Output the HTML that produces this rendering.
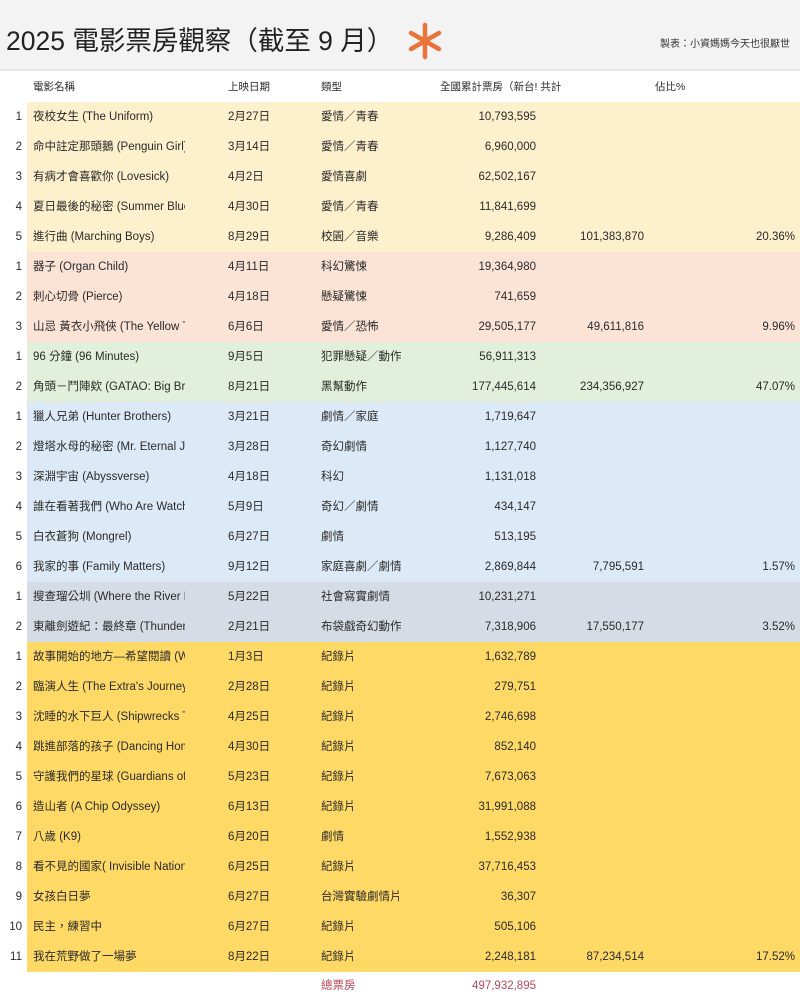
<!DOCTYPE html><html><head><meta charset="utf-8"><style>
*{margin:0;padding:0;box-sizing:border-box}
body{width:800px;height:1001px;background:#fff;font-family:"Liberation Sans","Noto Sans CJK TC",sans-serif;color:#2a2a2a;position:relative;overflow:hidden;font-size:11.5px}
.top{position:absolute;left:0;top:0;width:800px;height:71px;background:#f3f3f3;border-bottom:2px solid #e6e6e6}
.title{position:absolute;left:6px;top:19px;font-size:26.5px;color:#222;white-space:nowrap}
.ast{position:absolute;left:406px;top:22px}
.by{position:absolute;right:10px;top:35px;font-size:10px;color:#333}
.r{position:absolute;left:0;width:800px;height:30px;line-height:30px}
.r span{position:absolute;white-space:nowrap;overflow:hidden}
.bg{left:27px;right:0;top:0;bottom:0}
.n{left:0;width:22px;text-align:right}
.nm{left:33px;width:152px}
.d{left:228px}
.t{left:321px}
.b{left:400px;width:136px;text-align:right}
.s{left:540px;width:104px;text-align:right}
.p{left:650px;width:145px;text-align:right}
</style></head><body>
<div class="top"><div class="title">2025 電影票房觀察（截至 9 月）</div>
<svg class="ast" width="38" height="38" viewBox="0 0 38 38" stroke="#e8743b" stroke-width="4.5" stroke-linecap="round"><path d="M19 3V35M5 11L33 27M5 27L33 11"/></svg>
<div class="by">製表：小資媽媽今天也很厭世</div></div>
<div class="r" style="top:72px;font-size:10.5px"><span class="nm">電影名稱</span><span class="d">上映日期</span><span class="t">類型</span><span style="left:440px">全國累計票房（新台! 共計</span><span style="left:655px">佔比%</span></div>
<div id="rows"></div>
<script>
var data=[
["#fdf0cc",[["1","夜校女生 (The Uniform)","2月27日","愛情／青春","10,793,595"],["2","命中註定那頭鵝 (Penguin Girl)","3月14日","愛情／青春","6,960,000"],["3","有病才會喜歡你 (Lovesick)","4月2日","愛情喜劇","62,502,167"],["4","夏日最後的秘密 (Summer Blue Hour)","4月30日","愛情／青春","11,841,699"],["5","進行曲 (Marching Boys)","8月29日","校園／音樂","9,286,409","101,383,870","20.36%"]]],
["#fbe3d6",[["1","器子 (Organ Child)","4月11日","科幻驚悚","19,364,980"],["2","刺心切骨 (Pierce)","4月18日","懸疑驚悚","741,659"],["3","山忌 黃衣小飛俠 (The Yellow Taboo)","6月6日","愛情／恐怖","29,505,177","49,611,816","9.96%"]]],
["#e2efda",[["1","96 分鐘 (96 Minutes)","9月5日","犯罪懸疑／動作","56,911,313"],["2","角頭－鬥陣欸 (GATAO: Big Brother)","8月21日","黑幫動作","177,445,614","234,356,927","47.07%"]]],
["#dce9f6",[["1","獵人兄弟 (Hunter Brothers)","3月21日","劇情／家庭","1,719,647"],["2","燈塔水母的秘密 (Mr. Eternal Jelly)","3月28日","奇幻劇情","1,127,740"],["3","深淵宇宙 (Abyssverse)","4月18日","科幻","1,131,018"],["4","誰在看著我們 (Who Are Watching)","5月9日","奇幻／劇情","434,147"],["5","白衣蒼狗 (Mongrel)","6月27日","劇情","513,195"],["6","我家的事 (Family Matters)","9月12日","家庭喜劇／劇情","2,869,844","7,795,591","1.57%"]]],
["#d6dce5",[["1","搜查瑠公圳 (Where the River Flows)","5月22日","社會寫實劇情","10,231,271"],["2","東離劍遊紀：最終章 (Thunderbolt)","2月21日","布袋戲奇幻動作","7,318,906","17,550,177","3.52%"]]],
["#ffd966",[["1","故事開始的地方—希望閱讀 (Where)"," 1月3日","紀錄片","1,632,789"],["2","臨演人生 (The Extra's Journey)","2月28日","紀錄片","279,751"],["3","沈睡的水下巨人 (Shipwrecks Taiwan)","4月25日","紀錄片","2,746,698"],["4","跳進部落的孩子 (Dancing Home)","4月30日","紀錄片","852,140"],["5","守護我們的星球 (Guardians of Earth)","5月23日","紀錄片","7,673,063"],["6","造山者 (A Chip Odyssey)","6月13日","紀錄片","31,991,088"],["7","八歲 (K9)","6月20日","劇情","1,552,938"],["8","看不見的國家( Invisible Nation)","6月25日","紀錄片","37,716,453"],["9","女孩白日夢","6月27日","台灣實驗劇情片","36,307"],["10","民主，練習中","6月27日","紀錄片","505,106"],["11","我在荒野做了一場夢","8月22日","紀錄片","2,248,181","87,234,514","17.52%"]]]];
var h="",y=102;
data.forEach(function(g){g[1].forEach(function(r){h+='<div class="r" style="top:'+y+'px"><span class="bg" style="background:'+g[0]+'"></span><span class="n">'+r[0]+'</span><span class="nm">'+r[1]+'</span><span class="d">'+r[2]+'</span><span class="t">'+r[3]+'</span><span class="b">'+r[4]+'</span><span class="s">'+(r[5]||"")+'</span><span class="p">'+(r[6]||"")+'</span></div>';y+=30;});});
h+='<div class="r" style="top:'+y+'px;color:#b8475c;height:29px;line-height:28px"><span class="t">總票房</span><span class="b">497,932,895</span></div>';
document.getElementById("rows").innerHTML=h;
</script>
</body></html>
